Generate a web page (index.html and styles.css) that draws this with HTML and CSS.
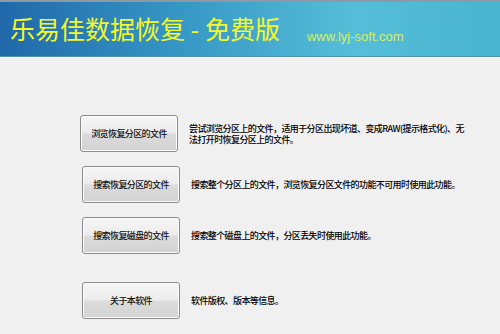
FILE: index.html
```html
<!DOCTYPE html>
<html>
<head>
    <meta charset="utf-8">
    <title>乐易佳数据恢复 - 免费版</title>
    <link rel="stylesheet" href="styles.css">
</head>
<body>
    <div class="header">
        <h1 class="title">乐易佳数据恢复 - 免费版</h1>
        <span class="site">www.lyj-soft.com</span>
    </div>

    <div class="main">
        <div class="row row-first">
            <button type="button" class="btn">浏览恢复分区的文件</button>
            <p class="desc">尝试浏览分区上的文件，适用于分区出现坏道、变成RAW(提示格式化)、无法打开时恢复分区上的文件。</p>
        </div>
        <div class="row">
            <button type="button" class="btn">搜索恢复分区的文件</button>
            <p class="desc">搜索整个分区上的文件，浏览恢复分区文件的功能不可用时使用此功能。</p>
        </div>
        <div class="row">
            <button type="button" class="btn">搜索恢复磁盘的文件</button>
            <p class="desc">搜索整个磁盘上的文件，分区丢失时使用此功能。</p>
        </div>
        <div class="row row-about">
            <button type="button" class="btn">关于本软件</button>
            <p class="desc">软件版权、版本等信息。</p>
        </div>
    </div>
</body>
</html>
```

FILE: styles.css
```css
/* Page base */
body {
    font-family: "Noto Sans CJK SC", "Liberation Sans", sans-serif;
    background-color: #f0f0f0;
    margin: 0;
    padding: 0;
    width: 500px;
    height: 334px;
    overflow: hidden;
}

/* Blue banner on top */
.header {
    height: 54px;
    border-top: 2px solid #8d9aa6;
    border-bottom: 1px solid #4e8fae;
    box-shadow: 0 1px 0 #ffffff;
    background: linear-gradient(90deg, #2068aa 0%, #3596c4 35%, #55bdd8 70%, #4ab5cf 100%);
    display: flex;
    align-items: flex-end;
    padding-left: 10px;
}

.title {
    margin: 0 0 14px 0;
    font-size: 25px;
    font-weight: normal;
    line-height: 28px;
    color: #f4f82a;
}

.site {
    margin: 0 0 12px 27px;
    font-family: "Liberation Sans", sans-serif;
    font-size: 13px;
    color: #d4f06a;
}

/* Button rows */
.main {
    padding: 58px 0 0 82px;
}

.row {
    display: flex;
    align-items: center;
    gap: 11px;
    margin-bottom: 14px;
}

.row-first {
    margin-left: -2px;
}

.row-about {
    margin-top: 28px;
}

.btn {
    flex: none;
    width: 98px;
    height: 37px;
    padding: 0;
    font-family: inherit;
    font-size: 9px;
    font-weight: 500;
    letter-spacing: -0.6px;
    color: #111;
    border: 1px solid #8c8c8c;
    border-radius: 3px;
    background: linear-gradient(#f6f6f6 0%, #ececec 48%, #dcdcdc 52%, #d2d2d2 100%);
    box-shadow: inset 0 0 0 1px #fbfbfb;
    cursor: pointer;
}

.desc {
    margin: 0;
    max-width: 280px;
    font-size: 9px;
    font-weight: 500;
    letter-spacing: -0.6px;
    line-height: 11px;
    color: #000;
}
```
